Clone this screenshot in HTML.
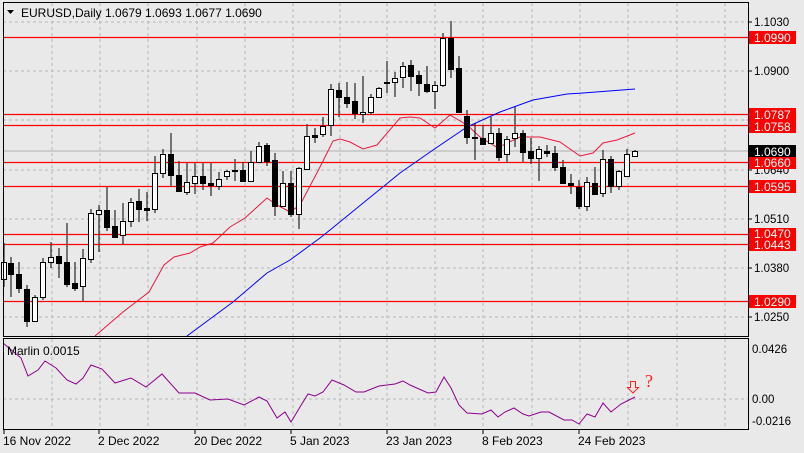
<!DOCTYPE html>
<html><head><meta charset="utf-8"><style>
html,body{margin:0;padding:0;background:#e9e9e9;}
svg{display:block;font-family:"Liberation Sans","DejaVu Sans",sans-serif;}
.g{stroke:#b8b8b8;stroke-dasharray:3,3;stroke-width:1}
.r{stroke:#ff0000;stroke-width:1.2}
.ax{font-size:11.5px;fill:#000}
.lb{font-size:12px;fill:#fff}
</style></head><body>
<svg width="804" height="453" viewBox="0 0 804 453" xmlns="http://www.w3.org/2000/svg">
<rect width="804" height="453" fill="#e9e9e9"/>
<g class="g">
<line x1="52" y1="3" x2="52" y2="336"/><line x1="100" y1="3" x2="100" y2="336"/><line x1="148" y1="3" x2="148" y2="336"/><line x1="197" y1="3" x2="197" y2="336"/><line x1="245" y1="3" x2="245" y2="336"/><line x1="293" y1="3" x2="293" y2="336"/><line x1="340" y1="3" x2="340" y2="336"/><line x1="387" y1="3" x2="387" y2="336"/><line x1="435" y1="3" x2="435" y2="336"/><line x1="483" y1="3" x2="483" y2="336"/><line x1="532" y1="3" x2="532" y2="336"/><line x1="580" y1="3" x2="580" y2="336"/><line x1="628" y1="3" x2="628" y2="336"/><line x1="677" y1="3" x2="677" y2="336"/><line x1="725" y1="3" x2="725" y2="336"/>
<line x1="52" y1="339" x2="52" y2="429"/><line x1="100" y1="339" x2="100" y2="429"/><line x1="148" y1="339" x2="148" y2="429"/><line x1="197" y1="339" x2="197" y2="429"/><line x1="245" y1="339" x2="245" y2="429"/><line x1="293" y1="339" x2="293" y2="429"/><line x1="340" y1="339" x2="340" y2="429"/><line x1="387" y1="339" x2="387" y2="429"/><line x1="435" y1="339" x2="435" y2="429"/><line x1="483" y1="339" x2="483" y2="429"/><line x1="532" y1="339" x2="532" y2="429"/><line x1="580" y1="339" x2="580" y2="429"/><line x1="628" y1="339" x2="628" y2="429"/><line x1="677" y1="339" x2="677" y2="429"/><line x1="725" y1="339" x2="725" y2="429"/>
<line x1="3" y1="22" x2="748" y2="22"/><line x1="3" y1="71" x2="748" y2="71"/><line x1="3" y1="120" x2="748" y2="120"/><line x1="3" y1="170" x2="748" y2="170"/><line x1="3" y1="219" x2="748" y2="219"/><line x1="3" y1="268" x2="748" y2="268"/><line x1="3" y1="317" x2="748" y2="317"/>
<line x1="3" y1="399" x2="748" y2="399"/>
</g>
<line x1="3" y1="151" x2="748" y2="151" stroke="#b0b0b0"/>
<g class="r">
<line x1="3" y1="37.5" x2="748" y2="37.5"/><line x1="3" y1="114.5" x2="748" y2="114.5"/><line x1="3" y1="125.5" x2="748" y2="125.5"/><line x1="3" y1="162.5" x2="748" y2="162.5"/><line x1="3" y1="186.5" x2="748" y2="186.5"/><line x1="3" y1="234.5" x2="748" y2="234.5"/><line x1="3" y1="244.5" x2="748" y2="244.5"/><line x1="3" y1="301.5" x2="748" y2="301.5"/>
</g>
<polyline fill="none" stroke="#e8193c" stroke-width="1" points="95,336 123,312 149,292 164,265 174,257 190,253 200,247 213,243 230,227 245,218 267,198 277,205 290,212 300,205 320,167 333,141 340,139 350,142 363,149 377,145 400,118 410,117 420,118 435,128 450,115 467,125 480,137 498,148 507,143 520,137 540,137 560,142 580,156 593,153 603,143 617,140 635,133"/>
<polyline fill="none" stroke="#0000ff" stroke-width="1" points="187,336 233,302 267,273 290,260 320,238 330,230 400,173 433,150 467,127 500,112 533,100 567,94 583,93 635,89"/>
<g stroke="#000" stroke-width="1">
<line x1="4" y1="243" x2="4" y2="287"/><rect x="1.5" y="262.5" width="5" height="17" fill="#fff"/>
<line x1="11" y1="257" x2="11" y2="297"/><rect x="8.5" y="263.5" width="5" height="11" fill="#000"/>
<line x1="19" y1="262" x2="19" y2="293"/><rect x="16.5" y="274.5" width="5" height="14" fill="#000"/>
<line x1="27" y1="285" x2="27" y2="327"/><rect x="24.5" y="289.5" width="5" height="32" fill="#000"/>
<line x1="35" y1="295" x2="35" y2="322"/><rect x="32.5" y="297.5" width="5" height="24" fill="#fff"/>
<line x1="43" y1="258" x2="43" y2="300"/><rect x="40.5" y="262.5" width="5" height="35" fill="#fff"/>
<line x1="51" y1="242" x2="51" y2="268"/><rect x="48.5" y="257.5" width="5" height="5" fill="#fff"/>
<line x1="59" y1="248" x2="59" y2="278"/><rect x="56.5" y="256.5" width="5" height="7" fill="#000"/>
<line x1="67" y1="223" x2="67" y2="287"/><rect x="64.5" y="262.5" width="5" height="22" fill="#000"/>
<line x1="75" y1="262" x2="75" y2="291"/><rect x="72.5" y="283.5" width="5" height="5" fill="#000"/>
<line x1="83" y1="249" x2="83" y2="302"/><rect x="80.5" y="258.5" width="5" height="28" fill="#fff"/>
<line x1="91" y1="209" x2="91" y2="263"/><rect x="88.5" y="213.5" width="5" height="46" fill="#fff"/>
<line x1="99" y1="205" x2="99" y2="252"/><rect x="96.5" y="210.5" width="5" height="4" fill="#fff"/>
<line x1="107" y1="187" x2="107" y2="231"/><rect x="104.5" y="210.5" width="5" height="17" fill="#000"/>
<line x1="115" y1="210" x2="115" y2="237"/><rect x="112.5" y="226.5" width="5" height="11" fill="#000"/>
<line x1="123" y1="203" x2="123" y2="244"/><rect x="120.5" y="221.5" width="5" height="14" fill="#fff"/>
<line x1="131" y1="198" x2="131" y2="227"/><rect x="128.5" y="202.5" width="5" height="19" fill="#fff"/>
<line x1="139" y1="189" x2="139" y2="222"/><rect x="136.5" y="201.5" width="5" height="8" fill="#000"/>
<line x1="147" y1="192" x2="147" y2="221"/><rect x="144.5" y="208.5" width="5" height="2" fill="#000"/>
<line x1="155" y1="156" x2="155" y2="213"/><rect x="152.5" y="173.5" width="5" height="36" fill="#fff"/>
<line x1="163" y1="149" x2="163" y2="178"/><rect x="160.5" y="154.5" width="5" height="19" fill="#fff"/>
<line x1="171" y1="133" x2="171" y2="187"/><rect x="168.5" y="154.5" width="5" height="21" fill="#000"/>
<line x1="179" y1="161" x2="179" y2="191"/><rect x="176.5" y="175.5" width="5" height="16" fill="#000"/>
<line x1="187" y1="163" x2="187" y2="195"/><rect x="184.5" y="182.5" width="5" height="10" fill="#fff"/>
<line x1="195" y1="163" x2="195" y2="194"/><rect x="192.5" y="176.5" width="5" height="7" fill="#fff"/>
<line x1="203" y1="163" x2="203" y2="190"/><rect x="200.5" y="176.5" width="5" height="7" fill="#000"/>
<line x1="211" y1="163" x2="211" y2="196"/><rect x="208.5" y="183.5" width="5" height="2" fill="#000"/>
<line x1="219" y1="172" x2="219" y2="190"/><rect x="216.5" y="179.5" width="5" height="7" fill="#fff"/>
<line x1="227" y1="170" x2="227" y2="180"/><rect x="224.5" y="171.5" width="5" height="5" fill="#fff"/>
<line x1="235" y1="159" x2="235" y2="181"/><rect x="232.5" y="170.5" width="5" height="1" fill="#000"/>
<line x1="243" y1="162" x2="243" y2="182"/><rect x="240.5" y="170.5" width="5" height="11" fill="#000"/>
<line x1="251" y1="151" x2="251" y2="182"/><rect x="248.5" y="162.5" width="5" height="19" fill="#fff"/>
<line x1="259" y1="142" x2="259" y2="163"/><rect x="256.5" y="146.5" width="5" height="16" fill="#fff"/>
<line x1="267" y1="143" x2="267" y2="166"/><rect x="264.5" y="145.5" width="5" height="16" fill="#000"/>
<line x1="275" y1="153" x2="275" y2="216"/><rect x="272.5" y="160.5" width="5" height="46" fill="#000"/>
<line x1="283" y1="171" x2="283" y2="207"/><rect x="280.5" y="183.5" width="5" height="23" fill="#fff"/>
<line x1="291" y1="171" x2="291" y2="217"/><rect x="288.5" y="183.5" width="5" height="31" fill="#000"/>
<line x1="299" y1="167" x2="299" y2="229"/><rect x="296.5" y="168.5" width="5" height="46" fill="#fff"/>
<line x1="307" y1="124" x2="307" y2="170"/><rect x="304.5" y="136.5" width="5" height="33" fill="#fff"/>
<line x1="315" y1="128" x2="315" y2="143"/><rect x="312.5" y="135.5" width="5" height="2" fill="#000"/>
<line x1="323" y1="117" x2="323" y2="137"/><rect x="320.5" y="126.5" width="5" height="8" fill="#fff"/>
<line x1="331" y1="84" x2="331" y2="136"/><rect x="328.5" y="89.5" width="5" height="36" fill="#fff"/>
<line x1="339" y1="83" x2="339" y2="117"/><rect x="336.5" y="90.5" width="5" height="7" fill="#000"/>
<line x1="347" y1="82" x2="347" y2="108"/><rect x="344.5" y="97.5" width="5" height="6" fill="#000"/>
<line x1="355" y1="83" x2="355" y2="119"/><rect x="352.5" y="101.5" width="5" height="12" fill="#000"/>
<line x1="363" y1="76" x2="363" y2="123"/><rect x="360.5" y="112.5" width="5" height="2" fill="#fff"/>
<line x1="371" y1="94" x2="371" y2="115"/><rect x="368.5" y="97.5" width="5" height="15" fill="#fff"/>
<line x1="379" y1="87" x2="379" y2="98"/><rect x="376.5" y="88.5" width="5" height="9" fill="#fff"/>
<line x1="387" y1="61" x2="387" y2="93"/><rect x="384.5" y="82.5" width="5" height="1" fill="#000"/>
<line x1="395" y1="72" x2="395" y2="97"/><rect x="392.5" y="78.5" width="5" height="4" fill="#fff"/>
<line x1="403" y1="62" x2="403" y2="88"/><rect x="400.5" y="66.5" width="5" height="11" fill="#fff"/>
<line x1="411" y1="60" x2="411" y2="91"/><rect x="408.5" y="65.5" width="5" height="11" fill="#000"/>
<line x1="419" y1="71" x2="419" y2="96"/><rect x="416.5" y="75.5" width="5" height="8" fill="#000"/>
<line x1="427" y1="66" x2="427" y2="93"/><rect x="424.5" y="84.5" width="5" height="7" fill="#000"/>
<line x1="435" y1="81" x2="435" y2="109"/><rect x="432.5" y="85.5" width="5" height="6" fill="#fff"/>
<line x1="443" y1="33" x2="443" y2="87"/><rect x="440.5" y="38.5" width="5" height="47" fill="#fff"/>
<line x1="451" y1="21" x2="451" y2="78"/><rect x="448.5" y="38.5" width="5" height="31" fill="#000"/>
<line x1="459" y1="56" x2="459" y2="113"/><rect x="456.5" y="68.5" width="5" height="44" fill="#000"/>
<line x1="467" y1="110" x2="467" y2="144"/><rect x="464.5" y="116.5" width="5" height="21" fill="#000"/>
<line x1="475" y1="123" x2="475" y2="160"/><rect x="472.5" y="137.5" width="5" height="1" fill="#000"/>
<line x1="483" y1="125" x2="483" y2="144"/><rect x="480.5" y="138.5" width="5" height="6" fill="#000"/>
<line x1="491" y1="117" x2="491" y2="144"/><rect x="488.5" y="133.5" width="5" height="10" fill="#fff"/>
<line x1="499" y1="128" x2="499" y2="161"/><rect x="496.5" y="133.5" width="5" height="24" fill="#000"/>
<line x1="507" y1="136" x2="507" y2="163"/><rect x="504.5" y="139.5" width="5" height="15" fill="#fff"/>
<line x1="515" y1="107" x2="515" y2="147"/><rect x="512.5" y="133.5" width="5" height="5" fill="#fff"/>
<line x1="523" y1="130" x2="523" y2="162"/><rect x="520.5" y="133.5" width="5" height="19" fill="#000"/>
<line x1="531" y1="138" x2="531" y2="164"/><rect x="528.5" y="151.5" width="5" height="7" fill="#000"/>
<line x1="539" y1="146" x2="539" y2="181"/><rect x="536.5" y="149.5" width="5" height="9" fill="#fff"/>
<line x1="547" y1="145" x2="547" y2="157"/><rect x="544.5" y="151.5" width="5" height="2" fill="#000"/>
<line x1="555" y1="146" x2="555" y2="171"/><rect x="552.5" y="153.5" width="5" height="14" fill="#000"/>
<line x1="563" y1="160" x2="563" y2="184"/><rect x="560.5" y="167.5" width="5" height="16" fill="#000"/>
<line x1="571" y1="174" x2="571" y2="194"/><rect x="568.5" y="183.5" width="5" height="2" fill="#000"/>
<line x1="579" y1="180" x2="579" y2="209"/><rect x="576.5" y="187.5" width="5" height="19" fill="#000"/>
<line x1="587" y1="177" x2="587" y2="211"/><rect x="584.5" y="182.5" width="5" height="24" fill="#fff"/>
<line x1="595" y1="167" x2="595" y2="194"/><rect x="592.5" y="183.5" width="5" height="11" fill="#000"/>
<line x1="603" y1="150" x2="603" y2="197"/><rect x="600.5" y="159.5" width="5" height="34" fill="#fff"/>
<line x1="611" y1="156" x2="611" y2="193"/><rect x="608.5" y="159.5" width="5" height="27" fill="#000"/>
<line x1="619" y1="170" x2="619" y2="190"/><rect x="616.5" y="171.5" width="5" height="15" fill="#fff"/>
<line x1="627" y1="149" x2="627" y2="177"/><rect x="624.5" y="154.5" width="5" height="22" fill="#fff"/>
<line x1="635" y1="150" x2="635" y2="156"/><rect x="632.5" y="151.5" width="5" height="5" fill="#fff"/>
</g>
<polyline fill="none" stroke="#8b008b" stroke-width="1" points="3,343 21,358 28,376 38,370 45,361 56,368 67,380 76,384 83,378 91,365 102,369 115,383 131,378 146,387 162,374 179,393 195,393 210,400 228,399 244,405 259,397 267,401 277,418 285,412 291,422 300,407 308,394 315,396 323,392 332,380 344,385 356,392 364,392 379,386 395,384 403,381 410,385 428,393 436,392 444,377 451,388 459,405 467,413 482,414 491,410 498,417 505,412 514,408 523,414 529,416 541,412 549,412 564,420 572,420 579,424 587,414 595,417 603,403 611,412 621,404 635,397"/>
<rect x="3.5" y="2.5" width="745" height="334" fill="none" stroke="#000"/>
<rect x="3.5" y="338.5" width="745" height="91" fill="none" stroke="#000"/>
<polygon points="7,10 14,10 10.5,14" fill="#000"/>
<text x="21" y="17" style="font-size:12px">EURUSD,Daily  1.0679 1.0693 1.0677 1.0690</text>
<text x="7" y="355" style="font-size:12px">Marlin 0.0015</text>
<polygon points="630.5,381.5 635.5,381.5 635.5,387.5 638.5,387.5 633,393 627.5,387.5 630.5,387.5" fill="none" stroke="#ff2020" stroke-width="1"/>
<text x="645" y="387" style="font-size:18px;font-family:'Liberation Serif',serif" fill="#ff2020">?</text>
<g class="ax">
<text x="754" y="26">1.1030</text><text x="754" y="75">1.0900</text><text x="754" y="174">1.0640</text><text x="754" y="223">1.0510</text><text x="754" y="272">1.0380</text><text x="754" y="321">1.0250</text>
<text x="752" y="353">0.0426</text><text x="752" y="403">0.00</text><text x="752" y="425">-0.0216</text>
</g>
<g stroke="#000"><line x1="748" y1="22" x2="752" y2="22"/><line x1="748" y1="71" x2="752" y2="71"/><line x1="748" y1="170" x2="752" y2="170"/><line x1="748" y1="219" x2="752" y2="219"/><line x1="748" y1="268" x2="752" y2="268"/><line x1="748" y1="317" x2="752" y2="317"/></g>
<rect x="749" y="31" width="47" height="13" fill="#ff0000"/><text class="lb" x="754" y="42">1.0990</text>
<rect x="749" y="108" width="47" height="13" fill="#ff0000"/><text class="lb" x="754" y="119">1.0787</text>
<rect x="749" y="120" width="47" height="13" fill="#ff0000"/><text class="lb" x="754" y="131">1.0758</text>
<rect x="749" y="145" width="47" height="13" fill="#000"/><text class="lb" x="754" y="156">1.0690</text>
<rect x="749" y="157" width="47" height="12" fill="#ff0000"/><text class="lb" x="754" y="167">1.0660</text>
<rect x="749" y="180" width="47" height="13" fill="#ff0000"/><text class="lb" x="754" y="191">1.0595</text>
<rect x="749" y="228" width="47" height="12" fill="#ff0000"/><text class="lb" x="754" y="238">1.0470</text>
<rect x="749" y="238" width="47" height="13" fill="#ff0000"/><text class="lb" x="754" y="249">1.0443</text>
<rect x="749" y="295" width="47" height="13" fill="#ff0000"/><text class="lb" x="754" y="306">1.0290</text>
<g class="ax" style="font-size:12px">
<text x="3" y="445">16 Nov 2022</text><text x="98" y="445">2 Dec 2022</text><text x="194" y="445">20 Dec 2022</text><text x="290" y="445">5 Jan 2023</text><text x="386" y="445">23 Jan 2023</text><text x="482" y="445">8 Feb 2023</text><text x="578" y="445">24 Feb 2023</text>
</g>
<g stroke="#000"><line x1="4" y1="430" x2="4" y2="434"/><line x1="99" y1="430" x2="99" y2="434"/><line x1="195" y1="430" x2="195" y2="434"/><line x1="291" y1="430" x2="291" y2="434"/><line x1="387" y1="430" x2="387" y2="434"/><line x1="483" y1="430" x2="483" y2="434"/><line x1="579" y1="430" x2="579" y2="434"/></g>
</svg>
</body></html>
